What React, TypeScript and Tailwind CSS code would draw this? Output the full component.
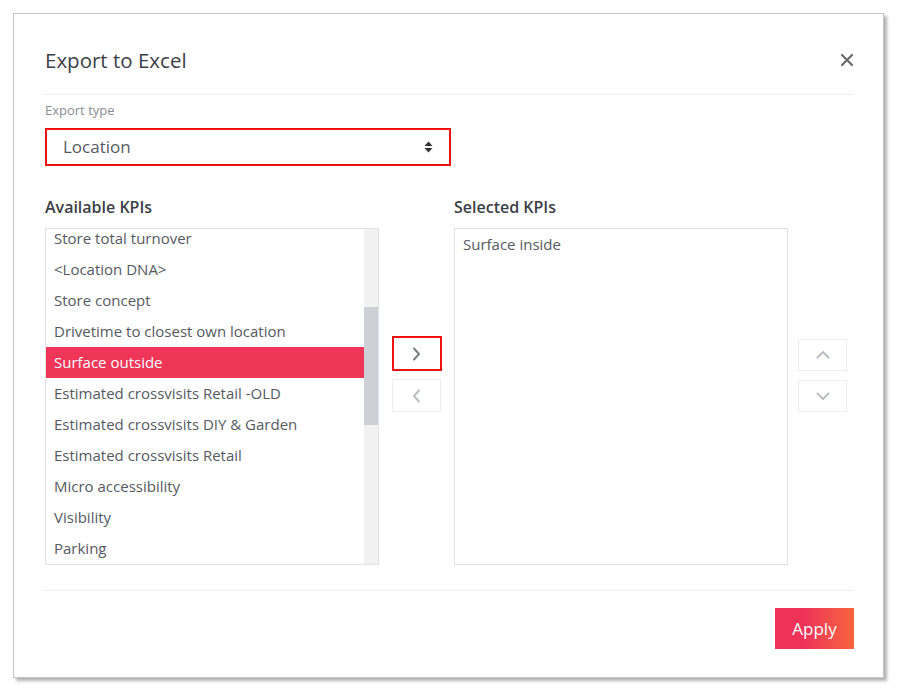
import React, { useState } from 'react';

const availableKpis = [
  'Store total turnover',
  '<Location DNA>',
  'Store concept',
  'Drivetime to closest own location',
  'Surface outside',
  'Estimated crossvisits Retail -OLD',
  'Estimated crossvisits DIY & Garden',
  'Estimated crossvisits Retail',
  'Micro accessibility',
  'Visibility',
  'Parking',
];

const selectedKpis = ['Surface inside'];

const Chevron: React.FC<{ dir: 'left' | 'right' | 'up' | 'down' }> = ({ dir }) => {
  const paths: Record<string, string> = {
    right: 'M4 1.5 L9 7 L4 12.5',
    left: 'M9 1.5 L4 7 L9 12.5',
    up: 'M1.5 9.5 L7 4 L12.5 9.5',
    down: 'M1.5 4.5 L7 10 L12.5 4.5',
  };
  return (
    <svg width="14" height="14" viewBox="0 0 14 14" fill="none">
      <path d={paths[dir]} stroke="currentColor" strokeWidth="2" strokeLinecap="round" strokeLinejoin="round" />
    </svg>
  );
};

export default function App() {
  const [selected, setSelected] = useState('Surface outside');

  return (
    <div className="min-h-[688px] w-[898px] bg-white pl-[13px] pt-[13px]" style={{ fontFamily: '"Open Sans", "Liberation Sans", sans-serif' }}>
      {/* dialog */}
      <div className="w-[871px] h-[665px] bg-white border border-[#c4c4c4] shadow-[3px_3px_3px_rgba(0,0,0,0.3)] px-[29px] flex flex-col">
        {/* header */}
        <div className="flex items-center justify-between pt-[32px] pb-[20px] border-b border-[#eeeff1]">
          <h2 className="pl-[2px] text-[20.5px] leading-[28px] text-[#3b4046]">Export to Excel</h2>
          <button className="text-[#6b6b6b]" title="Close">
            <svg width="14" height="14" viewBox="0 0 14 14">
              <path d="M2 2 L12 12 M12 2 L2 12" stroke="currentColor" strokeWidth="2.2" strokeLinecap="round" />
            </svg>
          </button>
        </div>

        {/* export type */}
        <div className="pt-[6px] pl-[2px]">
          <div className="text-[13px] leading-[18px] text-[#8a8d91]">Export type</div>
          <div className="mt-[9px] w-[406px] h-[38px] border-2 border-[#ee1111] flex items-center justify-between pl-[16px] pr-[16px]">
            <span className="text-[17px] text-[#555a5f]">Location</span>
            <svg width="9" height="12" viewBox="0 0 9 12">
              <path d="M4.5 0.5 L8.5 5 L0.5 5 Z M4.5 11.5 L8.5 7 L0.5 7 Z" fill="#333" />
            </svg>
          </div>
        </div>

        {/* KPI lists */}
        <div className="flex mt-[30px] pl-[2px]">
          <div className="w-[334px]">
            <div className="text-[16px] leading-[22px] font-semibold text-[#3b4046]">Available KPIs</div>
            <div className="mt-[10px] h-[337px] border border-[#dfe3e8] flex overflow-hidden">
              <div className="flex-1 overflow-hidden">
                <div className="-mt-[6px]">
                  {availableKpis.map((kpi) => (
                    <div
                      key={kpi}
                      onClick={() => setSelected(kpi)}
                      className={`h-[31px] flex items-center pl-[8px] text-[15px] cursor-pointer ${
                        selected === kpi ? 'bg-[#ef3558] text-white' : 'text-[#555a5f]'
                      }`}
                    >
                      {kpi}
                    </div>
                  ))}
                </div>
              </div>
              <div className="w-[14px] bg-[#f1f1f1] flex flex-col">
                <div className="h-[78px]" />
                <div className="h-[118px] bg-[#cdd1d7]" />
              </div>
            </div>
          </div>

          {/* move buttons */}
          <div className="w-[75px] flex flex-col items-center pt-[140px]">
            <button className="w-[50px] h-[35px] border-2 border-[#ee1111] flex items-center justify-center text-[#7b8087]">
              <Chevron dir="right" />
            </button>
            <button className="mt-[8px] w-[49px] h-[33px] border border-[#eceef0] flex items-center justify-center text-[#b9bec4]">
              <Chevron dir="left" />
            </button>
          </div>

          <div className="w-[334px]">
            <div className="text-[16px] leading-[22px] font-semibold text-[#3b4046]">Selected KPIs</div>
            <div className="mt-[10px] h-[337px] border border-[#dfe3e8]">
              {selectedKpis.map((kpi) => (
                <div key={kpi} className="h-[31px] flex items-center pl-[8px] text-[15px] text-[#555a5f]">
                  {kpi}
                </div>
              ))}
            </div>
          </div>

          {/* order buttons */}
          <div className="flex-1 flex flex-col items-end pt-[143px] pr-[7px]">
            <button className="w-[49px] h-[32px] border border-[#eceef0] flex items-center justify-center text-[#b9bec4]">
              <Chevron dir="up" />
            </button>
            <button className="mt-[9px] w-[49px] h-[32px] border border-[#eceef0] flex items-center justify-center text-[#b9bec4]">
              <Chevron dir="down" />
            </button>
          </div>
        </div>

        {/* footer */}
        <div className="mt-[25px] border-t border-[#eceff3] flex justify-end pt-[17px]">
          <button className="w-[79px] h-[41px] bg-gradient-to-r from-[#ef3358] from-40% to-[#f7633a] text-white text-[17px]">
            Apply
          </button>
        </div>
      </div>
    </div>
  );
}
